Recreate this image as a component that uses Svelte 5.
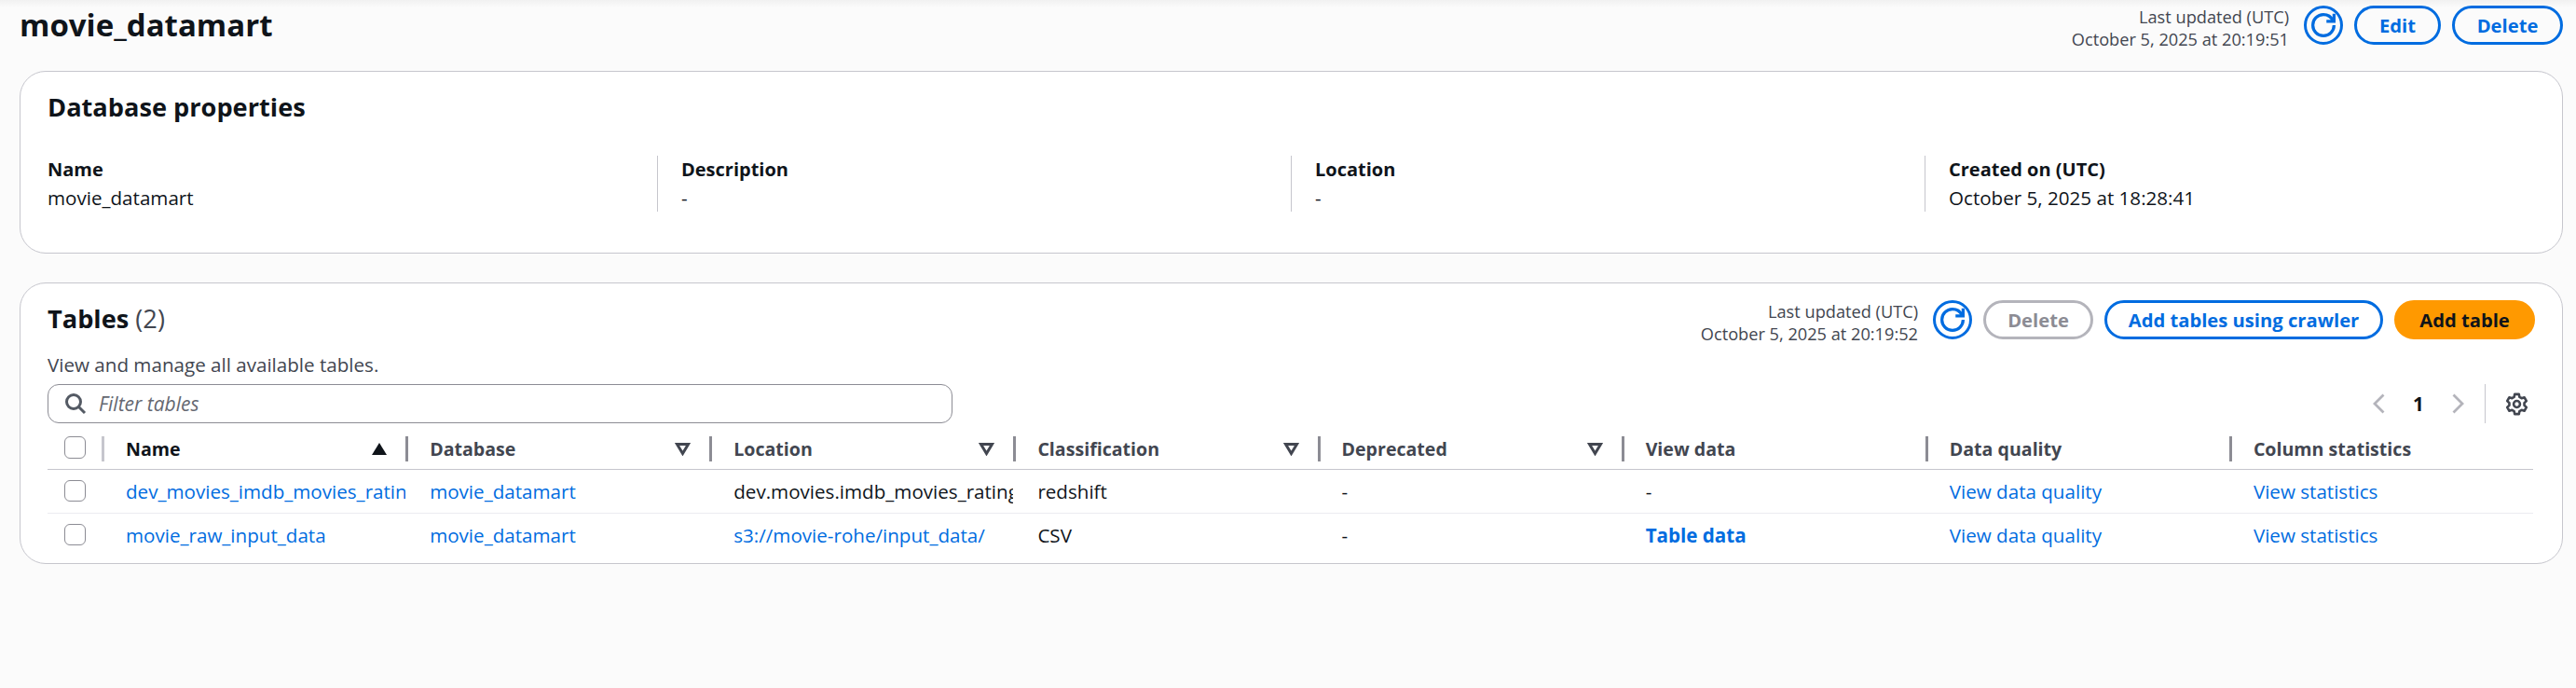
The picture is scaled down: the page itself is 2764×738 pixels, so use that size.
<script>
  const props = [
    { label: 'Name', value: 'movie_datamart' },
    { label: 'Description', value: '-' },
    { label: 'Location', value: '-' },
    { label: 'Created on (UTC)', value: 'October 5, 2025 at 18:28:41' }
  ]

  const columns = [
    { label: 'Name', sort: 'active' },
    { label: 'Database', sort: 'idle' },
    { label: 'Location', sort: 'idle' },
    { label: 'Classification', sort: 'idle' },
    { label: 'Deprecated', sort: 'idle' },
    { label: 'View data' },
    { label: 'Data quality' },
    { label: 'Column statistics' }
  ]

  const rows = [
    {
      name: 'dev_movies_imdb_movies_ratings',
      location: 'dev.movies.imdb_movies_ratings',
      locationLink: false,
      classification: 'redshift',
      viewData: '-'
    },
    {
      name: 'movie_raw_input_data',
      location: 's3://movie-rohe/input_data/',
      locationLink: true,
      classification: 'CSV',
      viewData: 'Table data'
    }
  ]

  // six-toothed gear outline
  function gearPath() {
    const pts = []
    for (let i = 0; i < 6; i++) {
      const a = -90 + 60 * i
      for (const [da, r] of [[-21, 7.8], [-12, 10.4], [12, 10.4], [21, 7.8]]) {
        const t = ((a + da) * Math.PI) / 180
        pts.push((12 + r * Math.cos(t)).toFixed(2) + ' ' + (12 + r * Math.sin(t)).toFixed(2))
      }
    }
    return 'M' + pts.join('L') + 'Z'
  }
</script>

{#snippet refresh()}
  <button class="refresh" aria-label="Refresh">
    <svg viewBox="0 0 16 16" width="26" height="26" fill="none" stroke="currentColor" stroke-width="2">
      <path d="M15 8c0 3.870-3.130 7-7 7s-7-3.130-7-7 3.130-7 7-7c2.800 0 5.200 1.630 6.300 4" />
      <path d="M15 .500V5.500H10" />
    </svg>
  </button>
{/snippet}

{#snippet updated(time)}
  <div class="updated">
    <div>Last updated (UTC)</div>
    <div>{time}</div>
  </div>
{/snippet}

<div class="page">
  <div class="topshade"></div>
  <header class="page-head">
    <h1>movie_datamart</h1>
    <div class="actions">
      {@render updated('October 5, 2025 at 20:19:51')}
      {@render refresh()}
      <button class="btn edit">Edit</button>
      <button class="btn del">Delete</button>
    </div>
  </header>

  <section class="card props">
    <h2>Database properties</h2>
    <div class="prop-grid">
      {#each props as p}
        <div class="prop">
          <div class="prop-label">{p.label}</div>
          <div class="prop-value">{p.value}</div>
        </div>
      {/each}
    </div>
  </section>

  <section class="card tables">
    <div class="tables-head">
      <div>
        <h2>Tables <span class="count">(2)</span></h2>
        <p class="desc">View and manage all available tables.</p>
      </div>
      <div class="actions">
        {@render updated('October 5, 2025 at 20:19:52')}
        {@render refresh()}
        <button class="btn disabled">Delete</button>
        <button class="btn crawler">Add tables using crawler</button>
        <button class="btn primary">Add table</button>
      </div>
    </div>

    <div class="tools">
      <div class="filter">
        <svg viewBox="0 0 24 24" width="24" height="24" fill="none" stroke="#545a64" stroke-width="3">
          <circle cx="10" cy="10" r="7.500" />
          <path d="M15.500 15.500l6.500 6.500" />
        </svg>
        <span>Filter tables</span>
      </div>
      <div class="pager">
        <svg class="chev" viewBox="0 0 14 24" width="14" height="24" fill="none" stroke="#b4b4bb" stroke-width="2.800">
          <path d="M12.500 2.500 3 12l9.500 9.500" />
        </svg>
        <span class="page-no">1</span>
        <svg class="chev" viewBox="0 0 14 24" width="14" height="24" fill="none" stroke="#b4b4bb" stroke-width="2.800">
          <path d="M1.500 2.500 11 12l-9.500 9.500" />
        </svg>
        <div class="gear-wrap">
          <svg viewBox="0 0 24 24" width="25" height="25" fill="none" stroke="#424650" stroke-width="2.500" stroke-linejoin="round">
            <circle cx="12" cy="12" r="3.300" />
            <path d={gearPath()} />
          </svg>
        </div>
      </div>
    </div>

    <table>
      <colgroup>
        <col class="c-check" />
        {#each columns as _}
          <col />
        {/each}
      </colgroup>
      <thead>
        <tr>
          <th class="check-cell"><span class="box"></span></th>
          {#each columns as c}
            <th class:sorted={c.sort === 'active'}>
              <div class="th-inner">
                <span>{c.label}</span>
                {#if c.sort === 'active'}
                  <svg viewBox="0 0 16 13" width="16" height="13"><path d="M8 0l8 13H0z" fill="#0f141a" /></svg>
                {:else if c.sort === 'idle'}
                  <svg viewBox="0 0 17 14" width="17" height="14"><path d="M2.500 1.500h12L8.500 11.500z" fill="none" stroke="#424650" stroke-width="3" /></svg>
                {/if}
              </div>
            </th>
          {/each}
        </tr>
      </thead>
      <tbody>
        {#each rows as r}
          <tr>
            <td class="check-cell"><span class="box"></span></td>
            <td><a href="#top">{r.name}</a></td>
            <td><a href="#top">movie_datamart</a></td>
            <td>
              {#if r.locationLink}<a href="#top">{r.location}</a>{:else}{r.location}{/if}
            </td>
            <td>{r.classification}</td>
            <td>-</td>
            <td>
              {#if r.viewData === '-'}-{:else}<a class="strong" href="#top">{r.viewData}</a>{/if}
            </td>
            <td><a href="#top">View data quality</a></td>
            <td><a href="#top">View statistics</a></td>
          </tr>
        {/each}
      </tbody>
    </table>
  </section>
</div>

<style>
  :global(body) {
    margin: 0;
    background: #fbfbfb;
  }

  .page {
    position: relative;
    width: 2764px;
    height: 738px;
    overflow: hidden;
    padding: 6px 14px 0 21px;
    box-sizing: border-box;
    font: 400 20.600px/28px 'Open Sans', 'Noto Sans', sans-serif;
    color: #0f141a;
  }

  .topshade {
    position: absolute;
    left: 0;
    right: 0;
    top: 0;
    height: 8px;
    background: linear-gradient(#f1f1f1, #fbfbfb);
  }

  .page-head {
    position: relative;
    display: flex;
    justify-content: space-between;
    align-items: flex-start;
    height: 70px;
  }

  h1 {
    margin: 0;
    font-size: 33px;
    line-height: 42px;
    font-weight: 700;
  }

  h2 {
    margin: 0;
    font-size: 27.200px;
    line-height: 34px;
    font-weight: 700;
  }

  .actions {
    display: flex;
    align-items: flex-start;
    gap: 12px;
  }

  .updated {
    font-size: 18.200px;
    line-height: 24px;
    color: #424650;
    text-align: right;
    margin-right: 4px;
  }

  button {
    font-family: inherit;
    cursor: pointer;
    background: transparent;
    box-sizing: border-box;
    height: 42px;
    border-radius: 21px;
    border: 3px solid #006ce0;
    color: #006ce0;
    padding: 0;
  }

  .refresh {
    width: 42px;
    display: flex;
    align-items: center;
    justify-content: center;
  }

  .btn {
    font-size: 20.200px;
    font-weight: 700;
  }

  .edit { width: 93px; }
  .del { width: 119px; }

  .disabled {
    width: 118px;
    border-color: #b4b4bb;
    color: #8c8c94;
  }

  .crawler { width: 299px; }

  .primary {
    width: 151px;
    background: #ff9900;
    border-color: #ff9900;
    color: #0f141a;
  }

  .card {
    background: #fff;
    border: 1.500px solid #c6c6cd;
    border-radius: 28px;
    box-sizing: border-box;
    width: 2729px;
  }

  .props {
    height: 196px;
    padding: 21px 29px 0;
  }

  .prop-grid {
    display: grid;
    grid-template-columns: repeat(4, 680px);
    margin: 34.500px 0 0 -26px;
  }

  .prop {
    height: 60px;
    box-sizing: border-box;
    padding-left: 25px;
    border-left: 1.500px solid #c6c6cd;
    line-height: 30px;
  }

  .prop:first-child {
    border-left-color: transparent;
  }

  .prop-label {
    font-size: 20px;
    font-weight: 700;
  }

  .tables {
    margin-top: 31px;
    height: 302px;
    padding: 21px 29px 0;
  }

  .tables-head {
    display: flex;
    justify-content: space-between;
    align-items: flex-start;
    height: 87px;
  }

  .tables-head .actions {
    margin-top: -3px;
  }

  .count {
    font-weight: 400;
    color: #424650;
  }

  .desc {
    margin: 18px 0 0;
    line-height: 28px;
    color: #424650;
  }

  .tools {
    display: flex;
    justify-content: space-between;
    align-items: center;
    height: 42px;
  }

  .filter {
    width: 971px;
    height: 42px;
    box-sizing: border-box;
    border: 1.500px solid #8c8c94;
    border-radius: 12px;
    display: flex;
    align-items: center;
    gap: 13px;
    padding-left: 17px;
    font-size: 21px;
    font-style: italic;
    color: #656871;
  }

  .pager {
    display: flex;
    align-items: center;
    height: 42px;
  }

  .page-no {
    width: 72px;
    text-align: center;
    font-weight: 700;
  }

  .gear-wrap {
    margin-left: 21px;
    height: 42px;
    padding-left: 21px;
    margin-right: 7px;
    border-left: 1.500px solid #c6c6cd;
    display: flex;
    align-items: center;
  }

  table {
    width: 2667px;
    margin-top: 14px;
    table-layout: fixed;
    border-collapse: collapse;
  }

  .c-check {
    width: 58px;
  }

  th {
    height: 27px;
    padding: 0 0 7.500px;
    text-align: left;
    font-size: 19.600px;
    font-weight: 700;
    color: #424650;
    border-bottom: 1.500px solid #c6c6cd;
    vertical-align: top;
  }

  th.sorted {
    color: #0f141a;
  }

  .th-inner {
    height: 27px;
    box-sizing: border-box;
    padding: 0 20px 0 23px;
    border-left: 3px solid #8c8c94;
    display: flex;
    justify-content: space-between;
    align-items: center;
    line-height: 27px;
  }

  th.sorted .th-inner {
    border-left-color: #c6c6cd;
  }

  .box {
    display: block;
    width: 23px;
    height: 23.500px;
    box-sizing: border-box;
    border: 1.500px solid #8c8c94;
    border-radius: 6px;
    background: #fff;
  }

  td {
    height: 46px;
    padding: 0 0 0 26px;
    overflow: hidden;
    white-space: nowrap;
    border-bottom: 1.500px solid #ebebf0;
  }

  .check-cell,
  td.check-cell {
    padding-left: 18px;
  }

  tbody tr:last-child td {
    border-bottom: 0;
    padding-bottom: 9px;
  }

  a {
    color: #006ce0;
    text-decoration: none;
  }

  a.strong {
    font-weight: 700;
  }
</style>
